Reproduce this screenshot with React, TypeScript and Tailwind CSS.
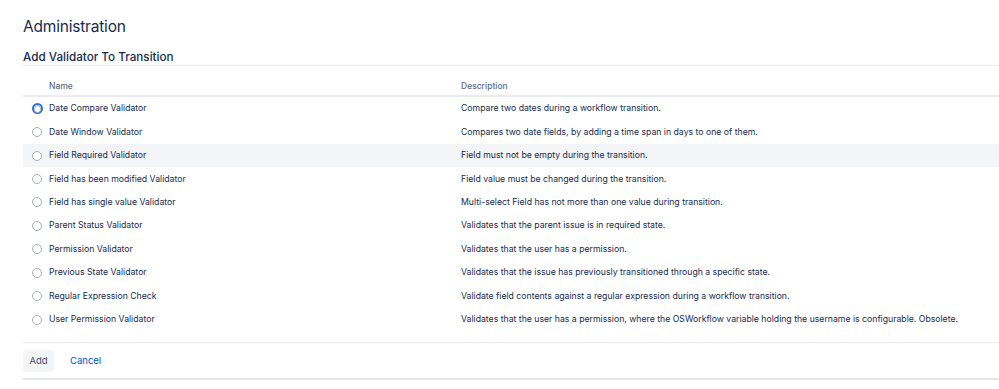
const VALIDATORS = [
  ["Date Compare Validator", "Compare two dates during a workflow transition."],
  ["Date Window Validator", "Compares two date fields, by adding a time span in days to one of them."],
  ["Field Required Validator", "Field must not be empty during the transition."],
  ["Field has been modified Validator", "Field value must be changed during the transition."],
  ["Field has single value Validator", "Multi-select Field has not more than one value during transition."],
  ["Parent Status Validator", "Validates that the parent issue is in required state."],
  ["Permission Validator", "Validates that the user has a permission."],
  ["Previous State Validator", "Validates that the issue has previously transitioned through a specific state."],
  ["Regular Expression Check", "Validate field contents against a regular expression during a workflow transition."],
  [
    "User Permission Validator",
    "Validates that the user has a permission, where the OSWorkflow variable holding the username is configurable. Obsolete.",
  ],
];

function Radio({ focused }: { focused?: boolean }) {
  if (focused) {
    return (
      <span className="flex h-[11px] w-[11px] items-center justify-center rounded-full border-2 border-[#2f6fdc]">
        <span className="h-[8px] w-[8px] rounded-full border border-[#a5adba] bg-white" />
      </span>
    );
  }
  return <span className="block h-[10px] w-[10px] rounded-full border border-[#a5adba] bg-white" />;
}

export default function App() {
  return (
    <div
      className="min-h-[389px] w-[999px] overflow-hidden bg-white pl-[23px] text-[#172b4d]"
      style={{ fontFamily: "Inter, 'Liberation Sans', Arial, sans-serif" }}
    >
      <h1 className="pt-[17px] text-[15.5px] leading-[20px] font-normal tracking-[-0.2px]">Administration</h1>
      <h2 className="mt-[13px] border-b border-[#ebecf0] pb-[1px] text-[11.7px] leading-[14px] font-medium">
        Add Validator To Transition
      </h2>

      <div className="border-b-2 border-[#ebecf0] flex h-[31px] items-end pb-[2px] text-[8.5px] font-medium text-[#5e6c84]">
        <div className="w-[26px]" />
        <div className="w-[412px]">Name</div>
        <div>Description</div>
      </div>

      {VALIDATORS.map(([name, desc], i) => (
        <div
          key={name}
          className={`flex h-[23.45px] items-center text-[8.7px] ${i === 2 ? "bg-[#f4f5f7]" : ""}`}
        >
          <div className="flex w-[26px] justify-center pl-[2px]">
            <Radio focused={i === 0} />
          </div>
          <div className="w-[412px]">{name}</div>
          <div>{desc}</div>
        </div>
      ))}

      <div className="mt-[11px] border-t border-[#ebecf0] pt-[7px] pb-[6px] flex items-center gap-[8px] text-[9.5px]">
        <button className="h-[22px] w-[31px] rounded-[3px] bg-[#f4f5f7] text-[#42526e]">Add</button>
        <button className="h-[22px] px-[8px] text-[#0052cc]">Cancel</button>
      </div>
      <div className="border-t-2 border-[#e4e5e9]" />
    </div>
  );
}
